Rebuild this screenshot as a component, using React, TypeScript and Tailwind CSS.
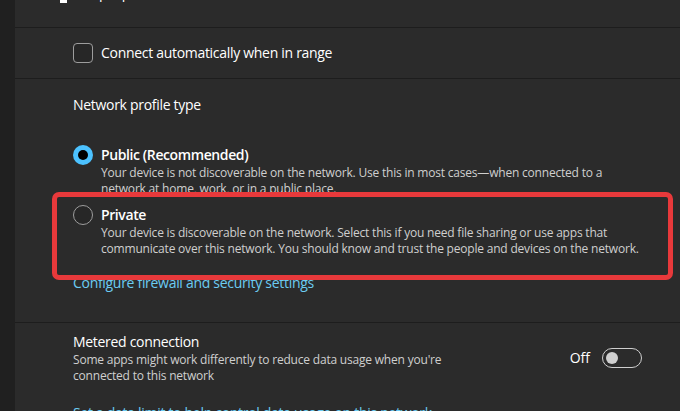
import React from "react";

const font = { fontFamily: '"Open Sans", "Noto Sans", sans-serif' };

function RadioOption({
  checked,
  title,
  children,
}: {
  checked?: boolean;
  title: string;
  children: React.ReactNode;
}) {
  return (
    <div className="flex gap-2">
      <div className="flex h-5 w-5 shrink-0 items-center justify-center">
        {checked ? (
          <span className="flex h-5 w-5 items-center justify-center rounded-full bg-[#4cc2ff]">
            <span className="h-[10px] w-[10px] rounded-full bg-black" />
          </span>
        ) : (
          <span className="h-5 w-5 rounded-full border border-[#9d9d9d] bg-[#272727]" />
        )}
      </div>
      <div>
        <p className="text-[14px] font-semibold leading-5 tracking-[-0.4px] text-white">{title}</p>
        <p className="text-[12px] leading-4 tracking-[-0.2px] text-[#cfcfcf]">{children}</p>
      </div>
    </div>
  );
}

export default function App() {
  return (
    <div
      className="relative flex h-[411px] w-[680px] overflow-hidden bg-[#202020]"
      style={font}
    >
      <div className="w-[15px] shrink-0" />

      <div className="flex flex-1 flex-col bg-[#2b2b2b]">
        {/* clipped row above */}
        <div className="h-[28px] shrink-0 overflow-hidden border-b border-[#1d1d1d] pl-[45px]">
          <div className="-mt-[17px] flex items-end gap-8">
            <span className="h-[18px] w-[7px] bg-white" />
            <span className="text-[14px] leading-5 text-white">properties</span>
          </div>
        </div>

        <div className="flex h-[51px] shrink-0 items-center gap-2 border-b border-[#1d1d1d] pl-[58px]">
          <span className="h-5 w-5 rounded-[4px] border border-[#9d9d9d] bg-[#272727]" />
          <span className="text-[14px] leading-5 tracking-[-0.3px] text-white">
            Connect automatically when in range
          </span>
        </div>

        <div className="flex h-[244px] shrink-0 flex-col border-b border-[#1d1d1d] pl-[58px] pt-4">
          <p className="text-[14px] leading-5 tracking-[-0.3px] text-white">Network profile type</p>

          <div className="mt-[30px] flex flex-col gap-2">
            <RadioOption checked title="Public (Recommended)">
              Your device is not discoverable on the network. Use this in most cases—when connected to a
              <br />
              network at home, work, or in a public place.
            </RadioOption>
            <RadioOption title="Private">
              Your device is discoverable on the network. Select this if you need file sharing or use apps that
              <br />
              communicate over this network. You should know and trust the people and devices on the network.
            </RadioOption>
          </div>

          <a className="mt-4 text-[14px] leading-5 tracking-[-0.3px] text-[#6ccbf2]">
            Configure firewall and security settings
          </a>
        </div>

        <div className="flex shrink-0 flex-col pl-[58px] pr-[38px] pt-[9px]">
          <div className="flex items-center justify-between">
            <div>
              <p className="text-[14px] leading-5 tracking-[-0.3px] text-white">Metered connection</p>
              <p className="text-[12px] leading-4 tracking-[-0.2px] text-[#cfcfcf]">
                Some apps might work differently to reduce data usage when you're
                <br />
                connected to this network
              </p>
            </div>
            <div className="flex items-center gap-3">
              <span className="text-[14px] leading-5 text-white">Off</span>
              <span className="flex h-5 w-10 items-center rounded-full border border-[#cfcfcf] pl-[3px]">
                <span className="h-3 w-3 rounded-full bg-[#cfcfcf]" />
              </span>
            </div>
          </div>
          <a className="mt-[19px] text-[14px] leading-5 tracking-[-0.3px] text-[#6ccbf2]">
            Set a data limit to help control data usage on this network
          </a>
        </div>
      </div>

      {/* highlight annotation */}
      <div className="pointer-events-none absolute left-[52px] top-[192px] h-[88px] w-[621px] rounded-[7px] border-[5px] border-[#e8393b]" />
    </div>
  );
}
